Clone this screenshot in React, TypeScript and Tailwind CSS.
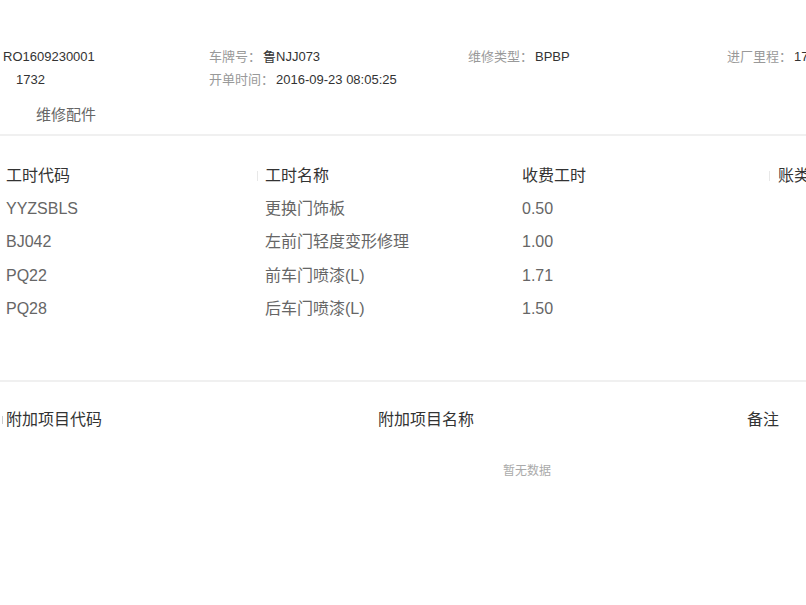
import React from "react";

const font = { fontFamily: '"Liberation Sans", "Noto Sans CJK SC", sans-serif' };

const labor = [
  ["YYZSBLS", "更换门饰板", "0.50"],
  ["BJ042", "左前门轻度变形修理", "1.00"],
  ["PQ22", "前车门喷漆(L)", "1.71"],
  ["PQ28", "后车门喷漆(L)", "1.50"],
];

function Info({ label, value }: { label: string; value: string }) {
  return (
    <div className="flex whitespace-nowrap">
      <span className="text-[#999]">{label}</span>
      <span className="ml-[2px] text-[#333]">{value}</span>
    </div>
  );
}

export default function App() {
  return (
    <div className="w-[806px] h-[605px] overflow-hidden bg-white" style={font}>
      <div className="w-[1100px] pt-[45px]">
        {/* order summary */}
        <div className="text-[13px] leading-[23px]">
          <div className="grid grid-cols-[206px_259px_259px_259px] pl-[3px]">
            <span className="text-[#333]">RO1609230001</span>
            <Info label="车牌号：" value="鲁NJJ073" />
            <Info label="维修类型：" value="BPBP" />
            <Info label="进厂里程：" value="17320" />
          </div>
          <div className="grid grid-cols-[206px_259px] pl-[3px]">
            <span className="pl-[13px] text-[#333]">1732</span>
            <Info label="开单时间：" value="2016-09-23 08:05:25" />
          </div>
        </div>

        <div className="pl-[36px] pt-[13px] pb-[8px] text-[15px] leading-[22px] text-[#666]">维修配件</div>
        <div className="h-[2px] bg-[#f0f0f0]" />

        {/* labor items */}
        <div className="pt-[25px] text-[16px]">
          <div className="grid grid-cols-[257px_257px_257px_257px] leading-[30px] text-[#333]">
            <div className="pl-[6px]">工时代码</div>
            <div className="relative pl-[8px]">
              <span className="absolute left-0 top-[10px] h-[10px] w-px bg-[#e8e8e8]" />
              工时名称
            </div>
            <div className="pl-[8px]">收费工时</div>
            <div className="relative pl-[7px]">
              <span className="absolute left-[-2px] top-[10px] h-[10px] w-px bg-[#e8e8e8]" />
              账类
            </div>
          </div>
          <div className="pt-[1px]">
            {labor.map(([code, name, hours]) => (
              <div key={code} className="grid grid-cols-[257px_257px_257px_257px] h-[33.5px] items-center text-[#666]">
                <div className="pl-[6px]">{code}</div>
                <div className="pl-[8px]">{name}</div>
                <div className="pl-[8px]">{hours}</div>
                <div />
              </div>
            ))}
          </div>
        </div>

        <div className="mt-[54px] h-[2px] bg-[#f0f0f0]" />

        {/* additional items */}
        <div className="pt-[23px] text-[16px]">
          <div className="grid grid-cols-[372px_369px_300px] leading-[30px] text-[#333]">
            <div className="relative pl-[6px]">
              <span className="absolute left-[2px] top-[11px] h-[8px] w-px bg-[#ccc]" />
              附加项目代码
            </div>
            <div className="pl-[6px]">附加项目名称</div>
            <div className="pl-[6px]">备注</div>
          </div>
          <div className="w-[1054px] pt-[26px] text-center text-[12px] leading-[20px] text-[#aaa]">暂无数据</div>
        </div>
      </div>
    </div>
  );
}
